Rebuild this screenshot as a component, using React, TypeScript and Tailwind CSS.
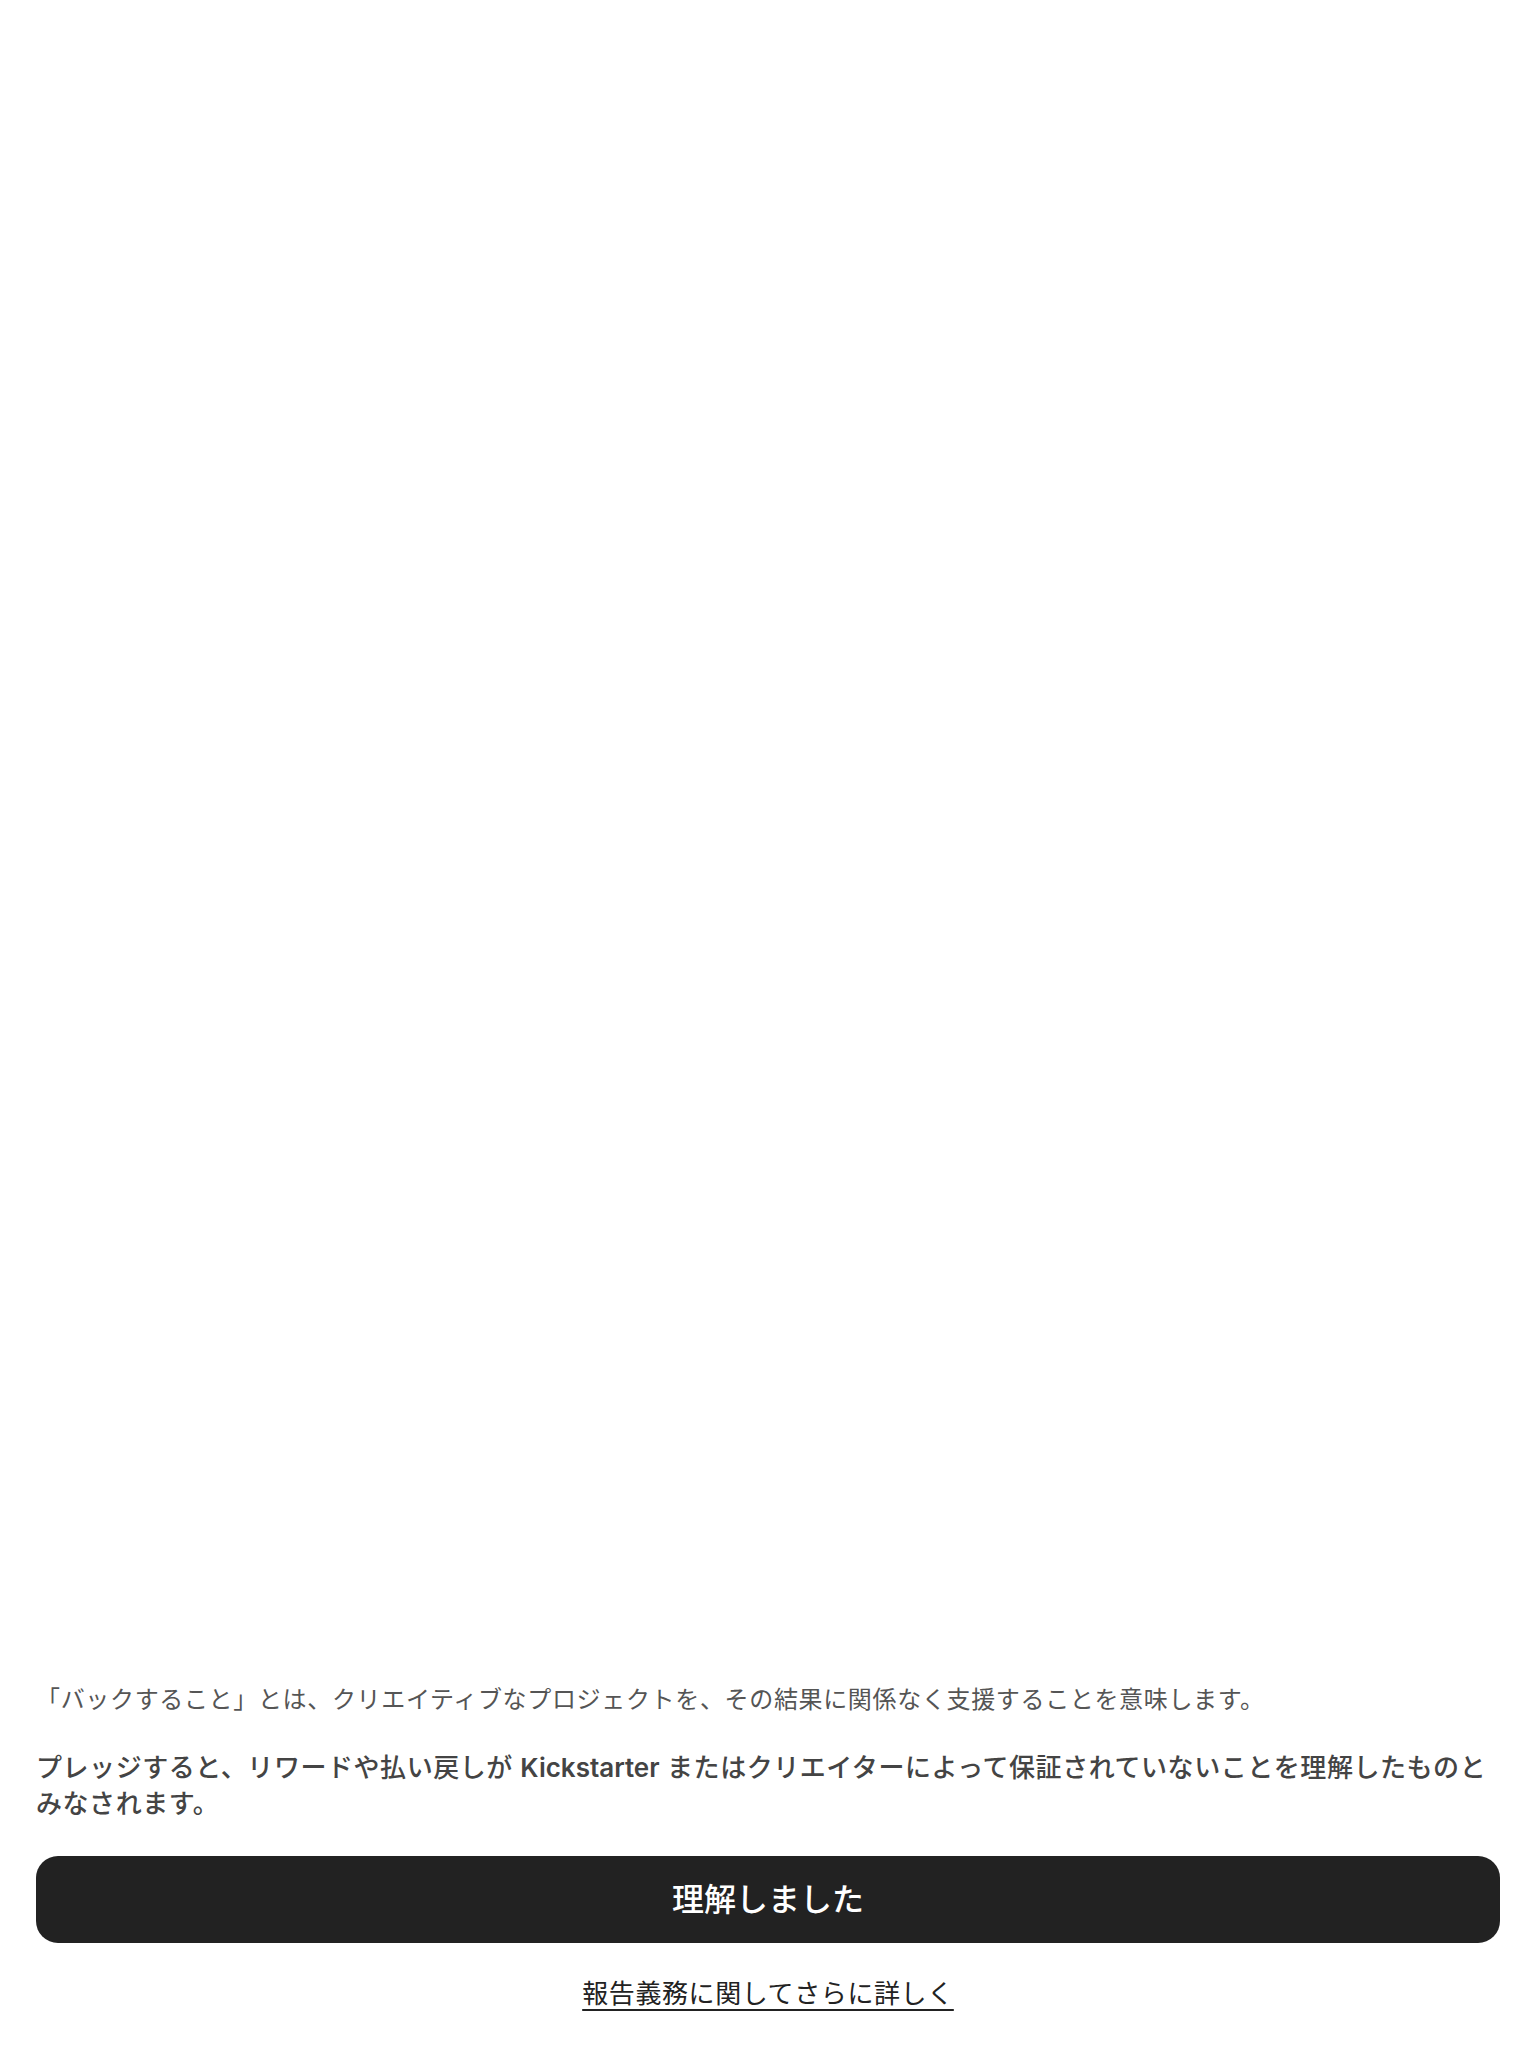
export default function App() {
  return (
    <div className="flex h-[2048px] flex-col justify-end bg-white px-[36px] pb-[36px] font-['Inter','Noto_Sans_CJK_JP',sans-serif]">
      {/* Disclaimer copy */}
      <p className="text-[24px] leading-[36px] tracking-[0.66px] text-[#555555]">
        「バックすること」とは、クリエイティブなプロジェクトを、その結果に関係なく支援することを意味します。
      </p>
      <p className="mt-[32px] text-[26px] font-medium leading-[36px] tracking-[0.55px] text-[#444444]">
        プレッジすると、リワードや払い戻しが <span className="font-semibold tracking-[0px]">Kickstarter</span> またはクリエイターによって保証されていないことを理解したものと
        <br />
        みなされます。
      </p>

      {/* Confirm button */}
      <button className="mt-[34px] flex h-[87px] w-full items-center justify-center rounded-[22px] bg-[#222222] text-[32px] font-medium text-white">
        理解しました
      </button>

      {/* Learn more link */}
      <div className="mt-[33px] flex justify-center">
        <a className="text-[26px] leading-[36px] tracking-[0.6px] text-[#222222] underline underline-offset-[6px]">
          報告義務に関してさらに詳しく
        </a>
      </div>
    </div>
  );
}
